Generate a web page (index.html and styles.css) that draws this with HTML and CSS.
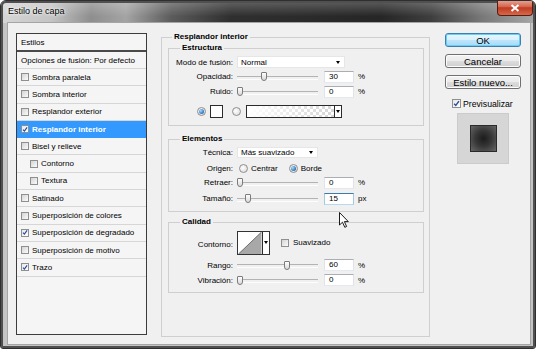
FILE: index.html
```html
<!DOCTYPE html>
<html lang="es">
<head>
  <meta charset="UTF-8" />
  <title>Estilo de capa</title>
  <link rel="stylesheet" href="styles.css">
</head>
<body>
  <div class="window">
    <div class="titlebar">
      <span class="title">Estilo de capa</span>
      <span class="close">
        <svg width="10" height="8" viewBox="0 0 10 8"><path d="M1.5 1 L8.5 7 M8.5 1 L1.5 7" stroke="#fff" stroke-width="2"/></svg>
      </span>
    </div>

    <div class="client">
      <div class="styles-list">
        <div class="item head">Estilos</div>
        <div class="item opts">Opciones de fusión: Por defecto</div>
        <div class="item"><span class="check"></span>Sombra paralela</div>
        <div class="item"><span class="check"></span>Sombra interior</div>
        <div class="item"><span class="check"></span>Resplandor exterior</div>
        <div class="item sel"><span class="check on"><svg viewBox="0 0 8 8"><path d="M1.3 4.2 L3.2 6.2 L6.8 1.3"/></svg></span>Resplandor interior</div>
        <div class="item"><span class="check"></span>Bisel y relieve</div>
        <div class="item sub"><span class="check"></span>Contorno</div>
        <div class="item sub"><span class="check"></span>Textura</div>
        <div class="item"><span class="check"></span>Satinado</div>
        <div class="item"><span class="check"></span>Superposición de colores</div>
        <div class="item"><span class="check on"><svg viewBox="0 0 8 8"><path d="M1.3 4.2 L3.2 6.2 L6.8 1.3"/></svg></span>Superposición de degradado</div>
        <div class="item"><span class="check"></span>Superposición de motivo</div>
        <div class="item"><span class="check on"><svg viewBox="0 0 8 8"><path d="M1.3 4.2 L3.2 6.2 L6.8 1.3"/></svg></span>Trazo</div>
      </div>

      <div class="panel">
        <span class="group-title">Resplandor interior</span>

        <div class="group structure">
          <span class="group-title inner">Estructura</span>
          <div class="row r14">
            <span class="lbl">Modo de fusión:</span>
            <div class="select mode">Normal<i class="arrow"></i></div>
          </div>
          <div class="row r15">
            <span class="lbl">Opacidad:</span>
            <div class="slider"><span class="thumb" style="left:30%"></span></div>
            <div class="num">30</div><span class="unit">%</span>
          </div>
          <div class="row r15">
            <span class="lbl">Ruido:</span>
            <div class="slider"><span class="thumb" style="left:0%"></span></div>
            <div class="num">0</div><span class="unit">%</span>
          </div>
          <div class="row color-row">
            <span class="radio on"></span>
            <span class="swatch"></span>
            <span class="radio second"></span>
            <div class="gradient"><span class="grad"></span><span class="drop"><i class="arrow"></i></span></div>
          </div>
        </div>

        <div class="group elements">
          <span class="group-title inner">Elementos</span>
          <div class="row r14">
            <span class="lbl">Técnica:</span>
            <div class="select technique">Más suavizado<i class="arrow"></i></div>
          </div>
          <div class="row r14 origin">
            <span class="lbl">Origen:</span>
            <span class="radio"></span><span class="opt">Centrar</span>
            <span class="radio on"></span><span class="opt">Borde</span>
          </div>
          <div class="row r15">
            <span class="lbl">Retraer:</span>
            <div class="slider"><span class="thumb" style="left:0%"></span></div>
            <div class="num">0</div><span class="unit">%</span>
          </div>
          <div class="row r15 size">
            <span class="lbl">Tamaño:</span>
            <div class="slider"><span class="thumb" style="left:10%"></span></div>
            <div class="num focus">15</div><span class="unit">px</span>
          </div>
        </div>

        <div class="group quality">
          <span class="group-title inner">Calidad</span>
          <div class="row contour-row">
            <span class="lbl">Contorno:</span>
            <div class="contour">
              <svg width="23" height="22" viewBox="0 0 23 22"><polygon points="0,22 23,0 23,22" fill="#a8a8a8"/><line x1="0" y1="22" x2="23" y2="0" stroke="#555" stroke-width="0.8"/></svg>
              <span class="drop"><i class="arrow"></i></span>
            </div>
            <span class="check smooth"></span><span>Suavizado</span>
          </div>
          <div class="row r14 range">
            <span class="lbl">Rango:</span>
            <div class="slider"><span class="thumb" style="left:58%"></span></div>
            <div class="num">60</div><span class="unit">%</span>
          </div>
          <div class="row r14 jitter">
            <span class="lbl">Vibración:</span>
            <div class="slider"><span class="thumb" style="left:0%"></span></div>
            <div class="num">0</div><span class="unit">%</span>
          </div>
        </div>
      </div>

      <div class="side">
        <div class="btn default">OK</div>
        <div class="btn">Cancelar</div>
        <div class="btn">Estilo nuevo...</div>
        <div class="preview-opt">
          <span class="check big on"><svg viewBox="0 0 8 8"><path d="M1.3 4.2 L3.2 6.2 L6.8 1.3"/></svg></span>
          <span>Previsualizar</span>
        </div>
        <div class="preview"><span class="preview-swatch"></span></div>
      </div>
    </div>

    <svg class="cursor" width="11" height="17" viewBox="0 0 11 17"><path d="M0.5 0.5 L0.5 13 L3.5 10.2 L5.8 15.3 L7.6 14.5 L5.4 9.6 L9.3 9.6 Z" fill="#fff" stroke="#000" stroke-width="0.9" stroke-linejoin="round"/></svg>
  </div>
</body>
</html>
```

FILE: styles.css
```css
* {
  box-sizing: border-box;
  margin: 0;
  padding: 0;
}

body {
  background: #fff;
  font-family: "Liberation Sans", Arial, sans-serif;
  font-size: 8px;
  color: #000;
}

/* window frame */
.window {
  position: relative;
  width: 536px;
  height: 349px;
  display: flex;
  flex-direction: column;
  padding: 0 4px 3px 6px;
  border: 1px solid #2f2f2f;
  border-radius: 6px 6px 3px 3px;
  overflow: hidden;
  background:
    linear-gradient(rgba(255,255,255,0.25), rgba(255,255,255,0) 70%) top / 100% 22px no-repeat,
    linear-gradient(to right, #d6d6d6 0, #c4c4c4 50px, #8e8e8e 90px, #a4a4a4 125px, #5c5c5c 170px, #2f2f2f 230px, #262626 380px, #3e3e3e 430px, #777 480px, #a9a9a9 536px) top / 100% 22px no-repeat,
    #c4c4c4;
  box-shadow: inset 0 0 0 2px #505050;
}

.titlebar {
  height: 21px;
  margin: 0 -2px 0 -5px;
  padding-left: 6px;
  display: flex;
  align-items: flex-start;
}

.title {
  font-size: 9px;
  line-height: 21px;
  text-shadow: 0 0 4px #fff, 0 0 2px #fff;
}

.close {
  margin-left: auto;
  margin-top: -1px;
  width: 36px;
  height: 16px;
  display: flex;
  align-items: center;
  justify-content: center;
  border: 1px solid #5b1b12;
  border-top: none;
  border-radius: 0 0 4px 4px;
  background: linear-gradient(#eaa99a, #d4654d 45%, #c13a20 52%, #d46a4d);
}

.client {
  flex: 1;
  display: flex;
  padding: 10px 0 0 8px;
  background: #f0f0f0;
  border: 1px solid #a5a5a5;
}

/* styles list */
.styles-list {
  width: 131px;
  height: 302px;
  border: 1px solid #3c3c3c;
  background: #f5f5f5;
  flex: none;
}

.item {
  height: 17.3px;
  display: flex;
  align-items: center;
  padding-left: 4px;
  white-space: nowrap;
  border-bottom: 1px solid #d6d6d6;
}

.item.head {
  height: 18px;
  border-bottom: 2px solid #4a4a4a;
}

.item.opts {
  height: 17px;
}

.item.sub {
  padding-left: 13px;
}

.item.sel {
  background: #3399ff;
  border-bottom-color: #3399ff;
  color: #fff;
  font-weight: bold;
}

.check {
  width: 8px;
  height: 8px;
  flex: none;
  margin-right: 3px;
  display: flex;
  align-items: center;
  justify-content: center;
  border: 1px solid #8e8f8f;
  background: linear-gradient(135deg, #d4d4d4, #fbfbfb);
}

.check.on {
  background: linear-gradient(135deg, #e8e8e8, #fff);
}

.check svg {
  width: 7px;
  height: 7px;
}

.check svg path {
  fill: none;
  stroke: #2b4d9c;
  stroke-width: 1.6;
}

/* middle panel */
.panel {
  position: relative;
  width: 269px;
  height: 300px;
  margin: 4px 0 0 14px;
  padding: 10px 5px 0 6px;
  border: 1px solid #cfcfcf;
  flex: none;
}

.group-title {
  position: absolute;
  top: -6px;
  left: 10px;
  padding: 0 2px;
  line-height: 10px;
  font-weight: bold;
  background: #f0f0f0;
}

.group-title.inner {
  left: 11px;
}

.group {
  position: relative;
  border: 1px solid #cfcfcf;
}

.structure {
  height: 78px;
  padding-top: 6px;
}

.elements {
  height: 73px;
  margin-top: 13px;
  padding-top: 5px;
}

.quality {
  height: 71px;
  margin-top: 10px;
  padding-top: 7px;
}

.row {
  display: flex;
  align-items: center;
  white-space: nowrap;
}

.r14 { height: 14px; }
.r15 { height: 15px; }

.lbl {
  width: 64px;
  margin-right: 4px;
  text-align: right;
  flex: none;
}

.select {
  display: flex;
  align-items: center;
  padding-left: 3px;
  background: #fff;
  border: 1px solid #e6e6e6;
}

.select.mode {
  width: 108px;
  height: 12px;
}

.select.technique {
  width: 81px;
  height: 11px;
}

.arrow {
  display: block;
  width: 0;
  height: 0;
  border-left: 2.5px solid transparent;
  border-right: 2.5px solid transparent;
  border-top: 3px solid #000;
}

.select .arrow {
  margin-left: auto;
  margin-right: 4px;
}

.slider {
  position: relative;
  width: 81px;
  height: 14px;
  margin-right: 6px;
  flex: none;
}

.slider::before {
  content: "";
  position: absolute;
  left: 0;
  right: 0;
  top: 6px;
  height: 2px;
  border-top: 1px solid #b3b3b3;
  border-bottom: 1px solid #fdfdfd;
}

.thumb {
  position: absolute;
  top: 2.5px;
  width: 6px;
  height: 9px;
  border: 1px solid #7b7b7b;
  border-radius: 1px 1px 3px 3px;
  background: linear-gradient(#fdfdfd, #d9d9d9);
}

.num {
  width: 30px;
  height: 12px;
  padding-left: 4px;
  line-height: 10px;
  background: #fff;
  border: 1px solid;
  border-color: #abadb3 #e2e3ea #e3e9ef #e2e3ea;
  flex: none;
}

.num.focus {
  border-color: #3d7bad #a4c9e3 #b7d9ed #a4c9e3;
}

.unit {
  margin-left: 4px;
}

.radio {
  position: relative;
  width: 9px;
  height: 9px;
  flex: none;
  border: 1px solid #8e8f8f;
  border-radius: 50%;
  background: radial-gradient(circle at 40% 40%, #fff, #d6d6d6);
}

.radio.on::after {
  content: "";
  position: absolute;
  left: 1px;
  top: 1px;
  width: 5px;
  height: 5px;
  border-radius: 50%;
  background: radial-gradient(circle at 35% 35%, #a8dcfa, #1b62b6 80%);
}

.color-row {
  height: 14px;
  margin-top: 5px;
  padding-left: 28px;
}

.swatch {
  width: 13px;
  height: 13px;
  margin-left: 4px;
  border: 1px solid #2b2b2b;
  background: #fff;
}

.radio.second {
  margin-left: 9px;
}

.gradient {
  width: 96px;
  height: 13px;
  margin-left: 5px;
  display: flex;
  border: 1px solid #2b2b2b;
}

.grad {
  flex: 1;
  background:
    linear-gradient(to right, #fff 0, rgba(255,255,255,0) 100%),
    repeating-conic-gradient(#d6d6d6 0 25%, #fff 0 50%) 0 0 / 6px 6px;
}

.drop {
  width: 7px;
  display: flex;
  align-items: center;
  justify-content: center;
  border-left: 1px solid #2b2b2b;
  background: #fff;
}

.origin .radio {
  margin-left: 2px;
}

.opt {
  margin-left: 3px;
}

.origin .opt + .radio {
  margin-left: 11px;
}

.origin {
  margin-top: 2px;
}

.size {
  margin-top: 1px;
}

.contour-row {
  height: 25px;
}

.contour-row .lbl {
  padding-top: 3px;
}

.contour {
  width: 33px;
  height: 24px;
  display: flex;
  border: 1px solid #333;
  background: #fff;
}

.contour svg {
  display: block;
  width: 24px;
  height: 22px;
}

.check.smooth {
  margin-left: 11px;
  margin-right: 4px;
}

.range {
  margin-top: 3px;
}

.jitter {
  margin-top: 1px;
}

/* right column */
.side {
  width: 76px;
  margin-left: 15px;
  display: flex;
  flex-direction: column;
  flex: none;
}

.btn {
  height: 14px;
  display: flex;
  align-items: center;
  justify-content: center;
  font-size: 9.5px;
  border: 1px solid #707070;
  border-radius: 3px;
  background: linear-gradient(#f2f2f2 0, #ebebeb 50%, #dddddd 50%, #cfcfcf);
  box-shadow: inset 0 0 0 1px #fcfcfc;
}

.btn + .btn {
  margin-top: 7px;
}

.btn.default {
  border-color: #3c7fb1;
  background: linear-gradient(#eaf6fd 0, #d9f0fc 50%, #bee6fd 50%, #a7d9f5);
  box-shadow: inset 0 0 0 1px #67cff7;
}

.preview-opt {
  height: 9px;
  margin-top: 10px;
  padding-left: 7px;
  display: flex;
  align-items: center;
  font-size: 8.7px;
}

.check.big {
  width: 9px;
  height: 9px;
  margin-right: 2px;
}

.preview {
  width: 52px;
  height: 51px;
  margin: 5px 0 0 12px;
  display: flex;
  align-items: center;
  justify-content: center;
  background: #d6d6d6;
  border: 1px solid #cbcbcb;
}

.preview-swatch {
  width: 27px;
  height: 27px;
  border: 1px solid #2a2a2a;
  background: radial-gradient(circle, #1c1c1c 0, #363636 45%, #666 100%);
}

.cursor {
  position: absolute;
  left: 338px;
  top: 211px;
}
```
